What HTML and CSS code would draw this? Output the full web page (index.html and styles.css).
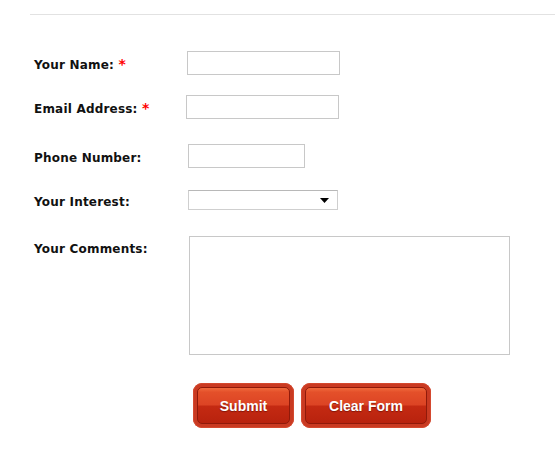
FILE: index.html
```html
<!DOCTYPE html>
<html lang="en">
<head>
    <meta charset="UTF-8">
    <title>Contact Form</title>
    <link rel="stylesheet" href="styles.css">
</head>
<body>

<div class="page">
    <div class="divider"></div>

    <form class="contact-form" onsubmit="return false;">
        <div class="field">
            <label class="field-label" for="name">Your Name: <span class="req">*</span></label>
            <input type="text" id="name" class="text-input name-input">
        </div>
        <div class="field field-email">
            <label class="field-label" for="email">Email Address: <span class="req">*</span></label>
            <input type="text" id="email" class="text-input email-input">
        </div>
        <div class="field field-phone">
            <label class="field-label" for="phone">Phone Number:</label>
            <input type="text" id="phone" class="text-input phone-input">
        </div>
        <div class="field field-interest">
            <label class="field-label" for="interest">Your Interest:</label>
            <div class="select-box">
                <select id="interest">
                    <option></option>
                    <option>Sales</option>
                    <option>Support</option>
                    <option>Other</option>
                </select>
                <svg class="select-arrow" width="9" height="5" viewBox="0 0 9 5"><path d="M0 0H9L4.5 5Z" fill="#000"/></svg>
            </div>
        </div>
        <div class="field field-comments">
            <label class="field-label label-top" for="comments">Your Comments:</label>
            <textarea id="comments" class="comments-input"></textarea>
        </div>

        <div class="actions">
            <button type="submit" class="red-button submit-button"><span>Submit</span></button>
            <button type="reset" class="red-button clear-button"><span>Clear Form</span></button>
        </div>
    </form>
</div>

</body>
</html>
```

FILE: styles.css
```css
body {
    margin: 0;
    padding: 0;
    background-color: #fff;
    font-family: 'DejaVu Sans', sans-serif;
}

.page {
    padding-top: 14px;
    margin-left: 30px;
}

.divider {
    border-top: 1px solid #e2e2e2;
}

.contact-form {
    padding: 36px 0 0 4px;
}

.field {
    display: flex;
    align-items: center;
}

.field-email {
    margin-top: 20px;
}

.field-phone {
    margin-top: 25px;
}

.field-interest {
    margin-top: 22px;
}

.field-comments {
    margin-top: 26px;
    align-items: flex-start;
}

.field-label {
    width: 153px;
    flex-shrink: 0;
    padding-top: 3px;
    font-size: 12px;
    font-weight: bold;
    color: #111;
    letter-spacing: 0.2px;
}

.label-top {
    padding-top: 6px;
}

.req {
    color: #f00;
    font-size: 14px;
    line-height: 12px;
}

.text-input {
    box-sizing: border-box;
    height: 24px;
    border: 1px solid #c8c8c8;
    padding: 2px 4px;
    font-size: 12px;
    margin: 0;
}

.name-input {
    width: 153px;
}

.email-input {
    width: 153px;
    margin-left: -1px;
}

.phone-input {
    width: 117px;
    margin-left: 1px;
}

.select-box {
    box-sizing: border-box;
    width: 150px;
    height: 20px;
    margin-left: 1px;
    border: 1px solid #cfcfcf;
    border-top-color: #b8b8b8;
    display: flex;
    align-items: center;
    position: relative;
}

.select-box select {
    appearance: none;
    -webkit-appearance: none;
    border: none;
    background: transparent;
    width: 100%;
    height: 100%;
    padding: 0 4px;
    font-size: 12px;
    outline: none;
}

.select-arrow {
    position: absolute;
    right: 8px;
    top: 7px;
    pointer-events: none;
}

.comments-input {
    box-sizing: border-box;
    width: 321px;
    height: 119px;
    margin: 0 0 0 2px;
    border: 1px solid #c8c8c8;
    resize: none;
    font-size: 12px;
}

.actions {
    display: flex;
    gap: 7px;
    margin: 28px 0 0 159px;
}

.red-button {
    display: block;
    box-sizing: border-box;
    height: 45px;
    padding: 4px;
    border: none;
    border-radius: 9px;
    background-color: #c93a22;
    box-shadow: inset 0 0 0 1px #d4492f;
    cursor: pointer;
}

.red-button span {
    display: flex;
    align-items: center;
    justify-content: center;
    box-sizing: border-box;
    height: 37px;
    padding-top: 1px;
    border: 1px solid #901a0a;
    border-radius: 5px;
    background: linear-gradient(to bottom, #f06a3c 0%, #e4502a 12%, #dc4424 48%, #c42a12 52%, #b8220e 100%);
    color: #fff;
    font-family: 'Liberation Sans', Arial, sans-serif;
    font-size: 14px;
    font-weight: bold;
    text-shadow: 0 1px 1px rgba(90, 10, 0, 0.6);
}

.submit-button {
    width: 101px;
}

.clear-button {
    width: 130px;
}

.red-button:hover span {
    background: linear-gradient(to bottom, #f47a4c 0%, #e85a34 50%, #cc3218 52%, #c02a14 100%);
}
```
